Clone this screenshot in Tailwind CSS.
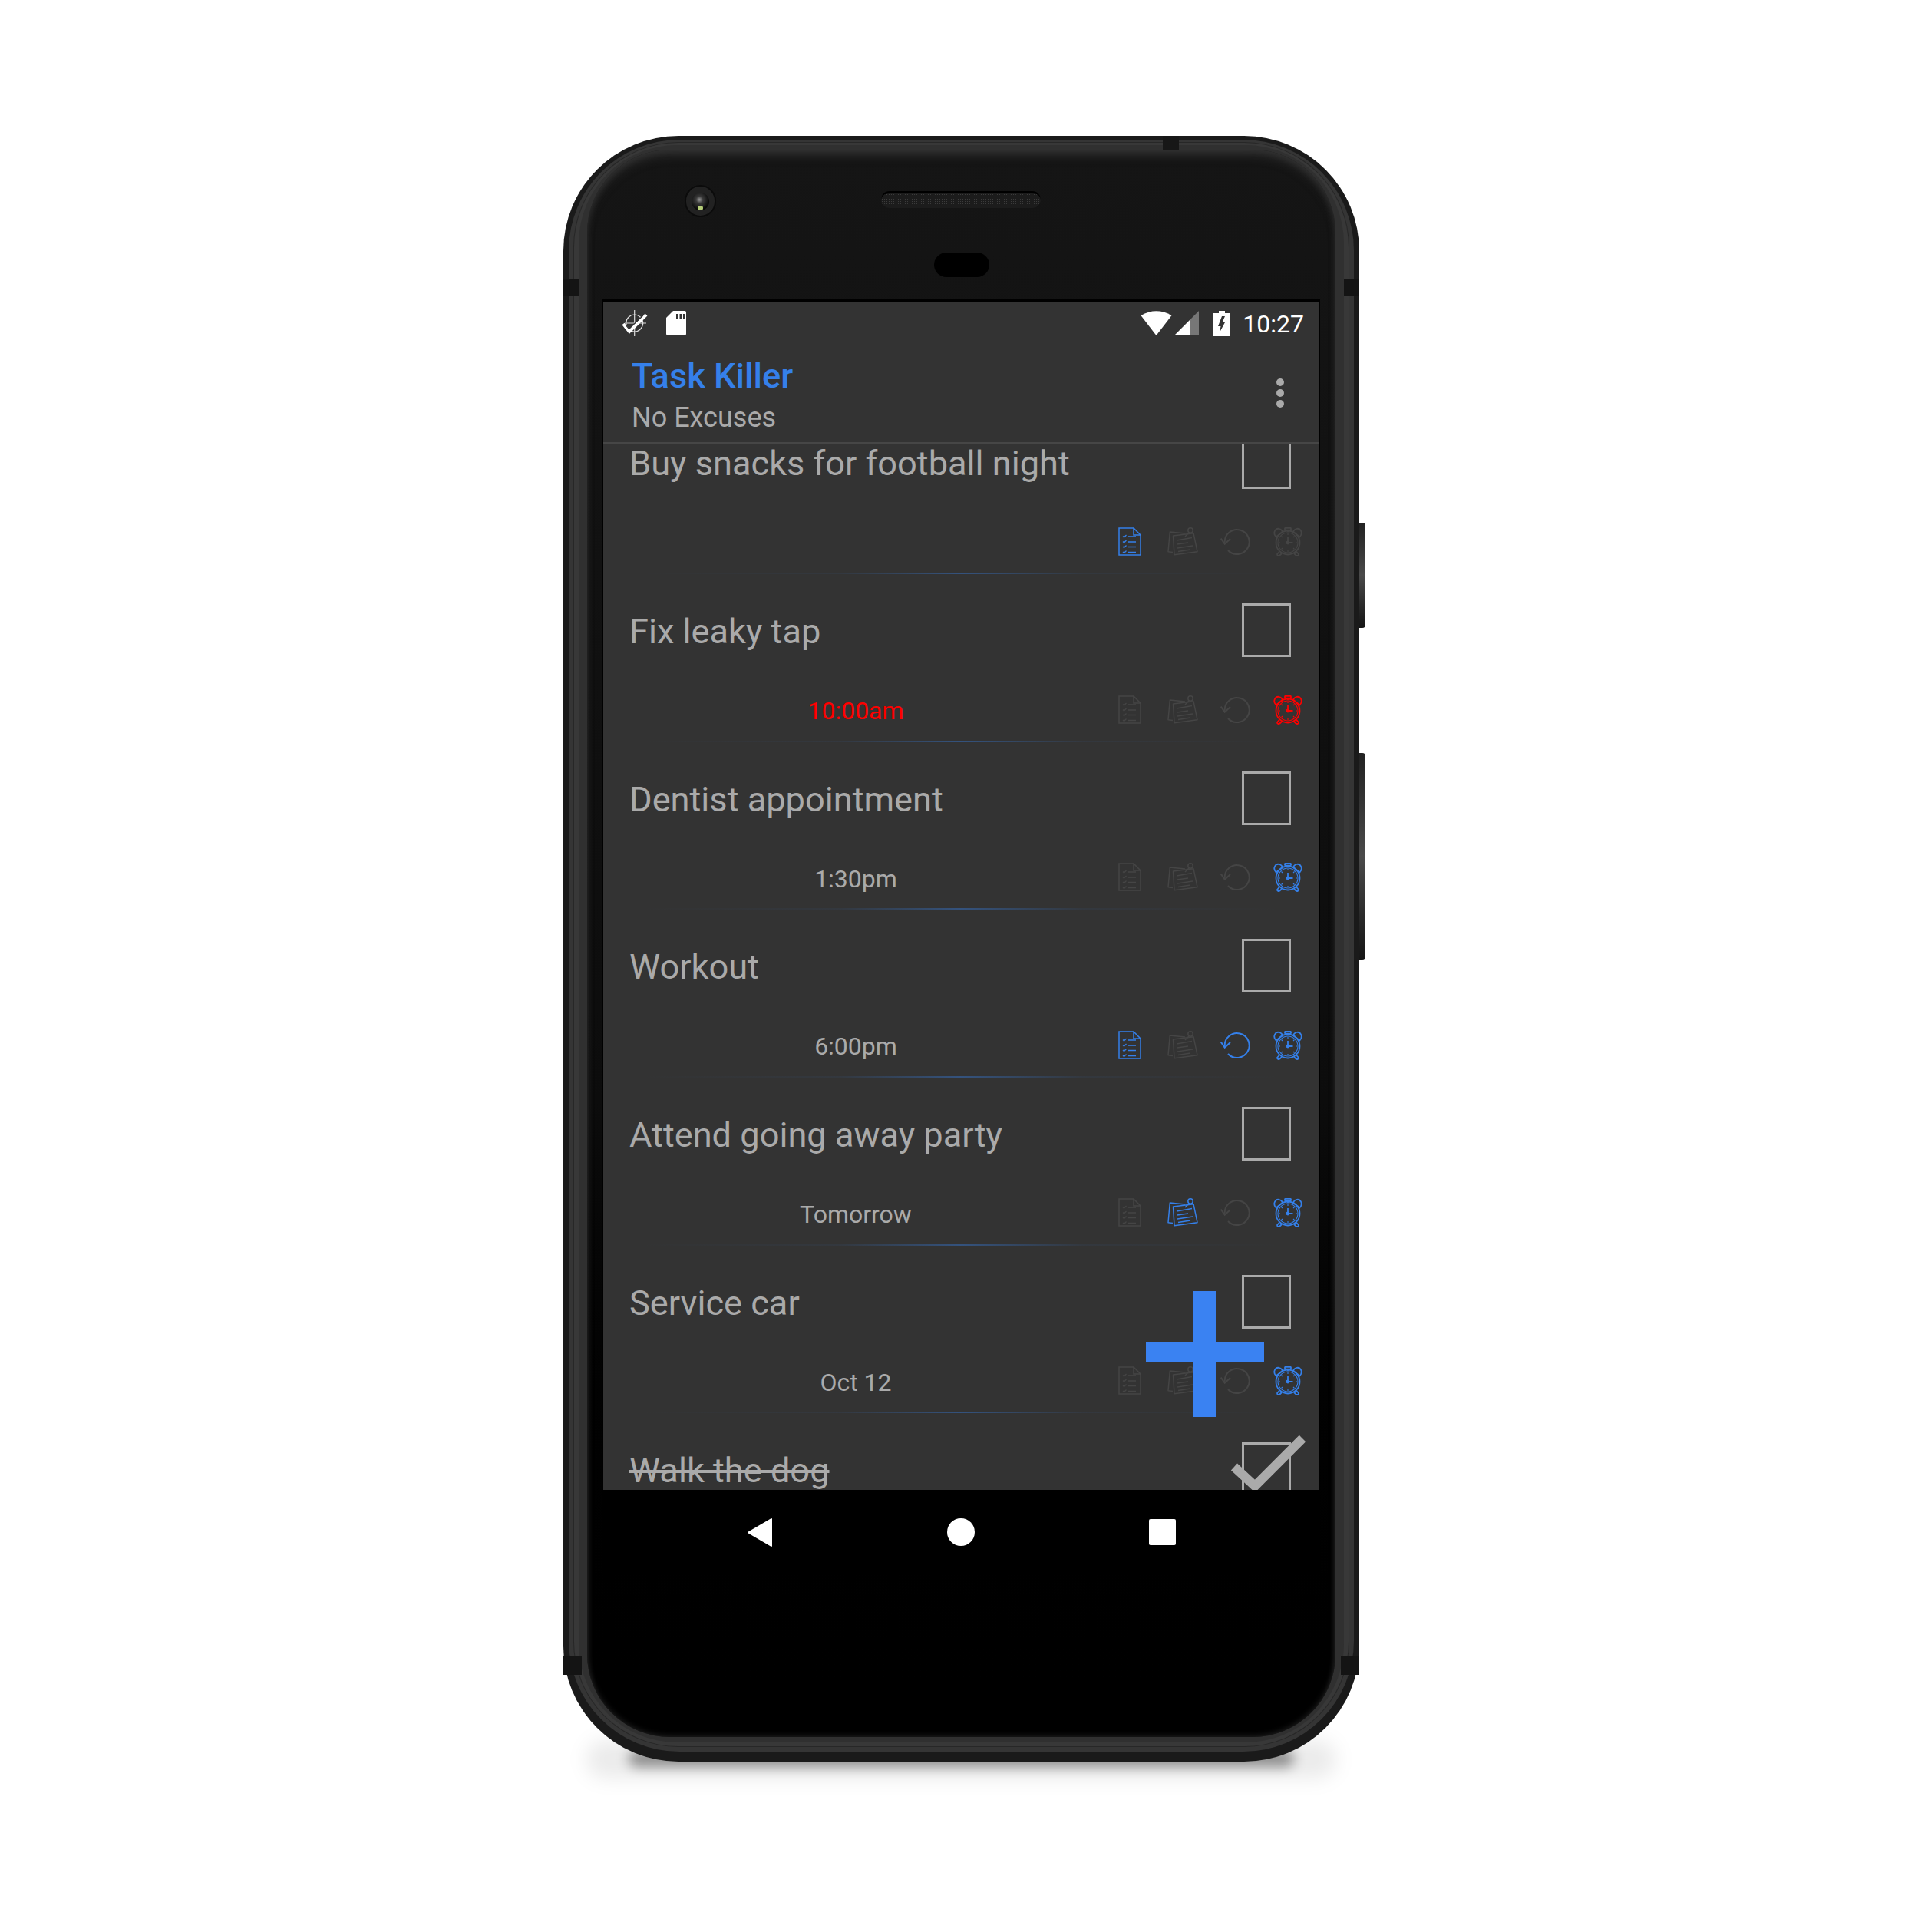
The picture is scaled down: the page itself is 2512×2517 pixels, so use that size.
<!DOCTYPE html>
<html lang="en">
<head>
  <meta charset="UTF-8" />
  <title>Task Killer</title>
  <script src="https://cdn.jsdelivr.net/npm/@tailwindcss/browser@4"></script>
</head>
<body class="bg-white font-[Roboto,sans-serif] w-[2512px] h-[2517px] overflow-hidden">
  <!-- shared task icons -->
  <svg class="hidden">
    <symbol id="doc" viewBox="0 0 30 37">
      <g fill="none" stroke="currentColor" stroke-width="1.5">
        <path d="M1 1H20L29 10V36H1Z" /><path d="M20 1V10H29" />
        <path stroke-width="1.300" d="M6 11.5l1.5 1.5 3-3M6 18.500l1.500 1.500 3-3M6 25l1.500 1.500 3-3M6 32l1.500 1.500 3-3" />
        <path stroke-width="1.600" d="M13 12H23M13 19H23M13 25.500H23M13 32.500H23" />
      </g>
    </symbol>
    <symbol id="note" viewBox="0 0 40 37">
      <g fill="none" stroke="currentColor" stroke-width="1.5" stroke-linejoin="round">
        <path d="M7 32.500L1 31.700L3.300 6L23 8" />
        <path d="M7.500 11L34 7.700L39 31.700L9 35.700Z" />
        <circle cx="30" cy="4" r="3.200" /><path d="M28 7L23 12" />
        <path stroke-width="1.600" d="M12 17L32 13.500M12.500 22L27 20M13 27L33 24M14 31.500L30 29" />
      </g>
    </symbol>
    <symbol id="undo" viewBox="0 0 38 36">
      <g fill="none" stroke="currentColor" stroke-width="2">
        <path d="M5.700 20A16 16 0 1 1 10 30" /><path d="M0.700 14.500L5.700 21.700L13 15" />
      </g>
    </symbol>
    <symbol id="alarm" viewBox="0 0 38 38">
      <g fill="none" stroke="currentColor" stroke-width="1.800">
        <circle cx="19" cy="20" r="15.500" /><circle cx="19" cy="20" r="13" stroke-width="1.100" />
        <path d="M3.500 12.500C-1.500 7 3 0.500 8 2C10 2.500 11.500 4 12 6Z" />
        <path d="M34.500 12.500C39.500 7 35 0.500 30 2C28 2.500 26.500 4 26 6Z" />
        <rect x="15" y="0.800" width="8" height="2.800" rx="1" /><path d="M19 3.600V6" />
        <path d="M8 31.500L5 35C5 37 7 37.500 8.500 36.500L11 34M30 31.500L33 35C33 37 31 37.500 29.500 36.500L27 34" />
        <path d="M19 13V20H25.500" /><circle cx="19" cy="20" r="1.500" fill="currentColor" />
        <path stroke-width="1.100" d="M19 8V10M19 30V32M7 20H9M29 20H31M10.500 11.500L12 13M27.500 11.500L26 13M10.500 28.500L12 27M27.500 28.500L26 27" />
      </g>
    </symbol>
  </svg>

  <div class="pl-[734px] pt-[177px]">
    <div class="relative isolate w-[1037px] h-[2118px]">
      <!-- shadow under the phone -->
      <div class="absolute -z-10 left-[85px] top-[2103px] w-[867px] h-[22px] rounded-full bg-black/40 blur-[8px]"></div>
      <div class="absolute -z-10 left-[30px] top-[2090px] w-[977px] h-[50px] rounded-full bg-black/8 blur-[12px]"></div>
      <!-- side buttons -->
      <div class="absolute -z-10 left-[1035px] top-[504px] w-[10px] h-[137px] rounded-r-[4px] bg-linear-to-b from-[#222] via-[#4a4a4a] to-[#151515]"></div>
      <div class="absolute -z-10 left-[1035px] top-[804px] w-[10px] h-[270px] rounded-r-[4px] bg-linear-to-b from-[#222] via-[#4a4a4a] to-[#151515]"></div>

      <!-- rim layers -->
      <div class="h-full bg-[#1a1a1a] rounded-[150px] pt-[5px] px-[7px] pb-[13px]">
        <div class="h-full bg-[#353535] rounded-[144px] pt-[3px] px-[6px] pb-[6px]">
          <div class="h-full bg-[#272727] rounded-[137px] p-[1px]">
            <div class="h-full bg-[#383838] rounded-[136px] pt-[3px] px-[6px] pb-[5px]">
              <div class="h-full bg-[#303030] rounded-[128px] pt-[6px] px-[11px] pb-[7px]">

                <!-- bezel -->
                <div class="h-full rounded-[108px] overflow-hidden bg-linear-to-b from-[#151515] via-[#0c0c0c] via-60% to-black shadow-[inset_0_12px_14px_-6px_#333,inset_0_0_8px_#2a2a2a] pt-[46px]">
                  <div class="flex items-start h-[42px]">
                    <div class="ml-[127px] w-[41px] h-[42px] rounded-full bg-[#222222] border-2 border-[#0b0b0b] flex items-center justify-center">
                      <div class="w-[23px] h-[23px] rounded-full bg-[radial-gradient(circle_at_45%_40%,#999_0,#3a3a3a_24%,#070707_70%)] flex items-end justify-center">
                        <div class="w-[7px] h-[6px] rounded-full bg-[#b4cc78]"></div>
                      </div>
                    </div>
                    <div class="ml-[215px] mt-[8px] w-[208px] h-[22px] rounded-full border-t-[3px] border-black bg-[#1c1c1c] bg-[radial-gradient(#3c3c3c_1px,transparent_1px)] bg-[length:3px_3px]"></div>
                  </div>
                  <div class="mt-[46px] mx-auto w-[72px] h-[32px] rounded-[16px] bg-black"></div>

                  <!-- screen -->
                  <div class="mt-[29px] ml-[19px] w-[936px] border-t-4 border-x-2 border-black">
                    <div class="bg-[#333333] h-[1547px] flex flex-col">

                      <!-- status bar -->
                      <div class="h-[54px] shrink-0 flex items-center pl-[23px] pr-[19px]">
                        <svg class="w-[36px] h-[36px]" viewBox="0 0 36 36" fill="none">
                          <circle cx="17.700" cy="18" r="11" stroke="#ddd" stroke-width="1.200" />
                          <path d="M17.700 1V35M5 18H33" stroke="#ddd" stroke-width="1.200" />
                          <path d="M3 19L11 29L33 7" stroke="#fff" stroke-width="4" />
                          <path d="M6 20L11 26M15 21L29 8" stroke="#333" stroke-width="1.200" />
                        </svg>
                        <svg class="ml-[23px] w-[26px] h-[32px]" viewBox="0 0 26 32">
                          <path fill="#fff" d="M9 0H24A2 2 0 0 1 26 2V30A2 2 0 0 1 24 32H2A2 2 0 0 1 0 30V9Z" />
                          <path fill="#333" d="M13 4h3v6h-3zM17.500 4h3v6h-3zM22 4h2.500v6H22z" />
                        </svg>
                        <svg class="ml-auto w-[41px] h-[32px]" viewBox="0 0 41 32">
                          <path fill="#fff" d="M0.500 6Q20.500 -5.500 40.500 6L20.500 32Z" />
                        </svg>
                        <svg class="ml-[3px] w-[32px] h-[32px]" viewBox="0 0 32 32">
                          <path fill="#777" d="M20 12L32 0V32H20Z" />
                          <path fill="#fff" d="M0 32L20 12V32Z" />
                        </svg>
                        <svg class="ml-[19px] w-[22px] h-[33px]" viewBox="0 0 22 33">
                          <path fill="#fff" d="M7 0H15V3H22V33H0V3H7Z" />
                          <path fill="#333" d="M11 7L6 20H9.500L8 28L15 15H11.500L15 7Z" />
                        </svg>
                        <span class="ml-[16px] pt-[2px] text-[32px] leading-[40px] text-white">10:27</span>
                      </div>

                      <!-- app bar -->
                      <div class="h-[128px] shrink-0 flex pl-[37px] pr-[45px] items-center justify-between">
                        <div class="pt-[5px]">
                          <div class="text-[#3580ea] text-[45.200px] leading-[54px] font-medium">Task Killer</div>
                          <div class="text-[#aaaaaa] text-[36px] leading-[44px] mt-[5px]">No Excuses</div>
                        </div>
                        <div class="flex flex-col gap-[4px]">
                          <div class="w-[10px] h-[10px] rounded-full bg-[#aaaaaa]"></div>
                          <div class="w-[10px] h-[10px] rounded-full bg-[#aaaaaa]"></div>
                          <div class="w-[10px] h-[10px] rounded-full bg-[#aaaaaa]"></div>
                        </div>
                      </div>
                      <div class="h-[2px] shrink-0 bg-[#464646] relative z-10"></div>

                      <!-- task list -->
                      <div class="relative flex-1 overflow-hidden">

                        <div class="h-[218.67px] -mt-[48.67px] flex flex-col">
                          <div class="h-[152px] flex justify-between items-start pl-[34px] pr-[36px]">
                            <div class="mt-[45px] text-[45.200px] leading-[60px] text-[#aaaaaa]">Buy snacks for football night</div>
                            <div class="mt-[38px] w-[64px] h-[70px] border-[3px] border-[#aaaaaa]"></div>
                          </div>
                          <div class="h-[49px] flex items-center">
                            <div class="w-[658px] pt-[3px] text-center text-[32px] leading-[40px] text-[#aaaaaa]"></div>
                            <div class="flex ml-[-6px]">
                              <div class="w-[68.5px] flex justify-center"><svg class="w-[30px] h-[37px] text-[#3580ea]"><use href="#doc" /></svg></div>
                              <div class="w-[68.5px] flex justify-center"><svg class="w-[40px] h-[37px] text-[#454545]"><use href="#note" /></svg></div>
                              <div class="w-[68.5px] flex justify-center"><svg class="w-[38px] h-[36px] text-[#454545]"><use href="#undo" /></svg></div>
                              <div class="w-[68.5px] flex justify-center"><svg class="w-[38px] h-[38px] text-[#454545]"><use href="#alarm" /></svg></div>
                            </div>
                          </div>
                          <div class="mt-auto h-[2px] bg-[linear-gradient(90deg,transparent_5%,#3580ea10_33%,#3580ea68_50%,#3580ea10_67%,transparent_95%)]"></div>
                        </div>

                        <div class="h-[218.67px] flex flex-col">
                          <div class="h-[152px] flex justify-between items-start pl-[34px] pr-[36px]">
                            <div class="mt-[45px] text-[45.200px] leading-[60px] text-[#aaaaaa]">Fix leaky tap</div>
                            <div class="mt-[38px] w-[64px] h-[70px] border-[3px] border-[#aaaaaa]"></div>
                          </div>
                          <div class="h-[49px] flex items-center">
                            <div class="w-[658px] pt-[3px] text-center text-[32px] leading-[40px] text-[#ff0000]">10:00am</div>
                            <div class="flex ml-[-6px]">
                              <div class="w-[68.5px] flex justify-center"><svg class="w-[30px] h-[37px] text-[#454545]"><use href="#doc" /></svg></div>
                              <div class="w-[68.5px] flex justify-center"><svg class="w-[40px] h-[37px] text-[#454545]"><use href="#note" /></svg></div>
                              <div class="w-[68.5px] flex justify-center"><svg class="w-[38px] h-[36px] text-[#454545]"><use href="#undo" /></svg></div>
                              <div class="w-[68.5px] flex justify-center"><svg class="w-[38px] h-[38px] text-[#ff0000]"><use href="#alarm" /></svg></div>
                            </div>
                          </div>
                          <div class="mt-auto h-[2px] bg-[linear-gradient(90deg,transparent_5%,#3580ea10_33%,#3580ea68_50%,#3580ea10_67%,transparent_95%)]"></div>
                        </div>

                        <div class="h-[218.67px] flex flex-col">
                          <div class="h-[152px] flex justify-between items-start pl-[34px] pr-[36px]">
                            <div class="mt-[45px] text-[45.200px] leading-[60px] text-[#aaaaaa]">Dentist appointment</div>
                            <div class="mt-[38px] w-[64px] h-[70px] border-[3px] border-[#aaaaaa]"></div>
                          </div>
                          <div class="h-[49px] flex items-center">
                            <div class="w-[658px] pt-[3px] text-center text-[32px] leading-[40px] text-[#aaaaaa]">1:30pm</div>
                            <div class="flex ml-[-6px]">
                              <div class="w-[68.5px] flex justify-center"><svg class="w-[30px] h-[37px] text-[#454545]"><use href="#doc" /></svg></div>
                              <div class="w-[68.5px] flex justify-center"><svg class="w-[40px] h-[37px] text-[#454545]"><use href="#note" /></svg></div>
                              <div class="w-[68.5px] flex justify-center"><svg class="w-[38px] h-[36px] text-[#454545]"><use href="#undo" /></svg></div>
                              <div class="w-[68.5px] flex justify-center"><svg class="w-[38px] h-[38px] text-[#3580ea]"><use href="#alarm" /></svg></div>
                            </div>
                          </div>
                          <div class="mt-auto h-[2px] bg-[linear-gradient(90deg,transparent_5%,#3580ea10_33%,#3580ea68_50%,#3580ea10_67%,transparent_95%)]"></div>
                        </div>

                        <div class="h-[218.67px] flex flex-col">
                          <div class="h-[152px] flex justify-between items-start pl-[34px] pr-[36px]">
                            <div class="mt-[45px] text-[45.200px] leading-[60px] text-[#aaaaaa]">Workout</div>
                            <div class="mt-[38px] w-[64px] h-[70px] border-[3px] border-[#aaaaaa]"></div>
                          </div>
                          <div class="h-[49px] flex items-center">
                            <div class="w-[658px] pt-[3px] text-center text-[32px] leading-[40px] text-[#aaaaaa]">6:00pm</div>
                            <div class="flex ml-[-6px]">
                              <div class="w-[68.5px] flex justify-center"><svg class="w-[30px] h-[37px] text-[#3580ea]"><use href="#doc" /></svg></div>
                              <div class="w-[68.5px] flex justify-center"><svg class="w-[40px] h-[37px] text-[#454545]"><use href="#note" /></svg></div>
                              <div class="w-[68.5px] flex justify-center"><svg class="w-[38px] h-[36px] text-[#3580ea]"><use href="#undo" /></svg></div>
                              <div class="w-[68.5px] flex justify-center"><svg class="w-[38px] h-[38px] text-[#3580ea]"><use href="#alarm" /></svg></div>
                            </div>
                          </div>
                          <div class="mt-auto h-[2px] bg-[linear-gradient(90deg,transparent_5%,#3580ea10_33%,#3580ea68_50%,#3580ea10_67%,transparent_95%)]"></div>
                        </div>

                        <div class="h-[218.67px] flex flex-col">
                          <div class="h-[152px] flex justify-between items-start pl-[34px] pr-[36px]">
                            <div class="mt-[45px] text-[45.200px] leading-[60px] text-[#aaaaaa]">Attend going away party</div>
                            <div class="mt-[38px] w-[64px] h-[70px] border-[3px] border-[#aaaaaa]"></div>
                          </div>
                          <div class="h-[49px] flex items-center">
                            <div class="w-[658px] pt-[3px] text-center text-[32px] leading-[40px] text-[#aaaaaa]">Tomorrow</div>
                            <div class="flex ml-[-6px]">
                              <div class="w-[68.5px] flex justify-center"><svg class="w-[30px] h-[37px] text-[#454545]"><use href="#doc" /></svg></div>
                              <div class="w-[68.5px] flex justify-center"><svg class="w-[40px] h-[37px] text-[#3580ea]"><use href="#note" /></svg></div>
                              <div class="w-[68.5px] flex justify-center"><svg class="w-[38px] h-[36px] text-[#454545]"><use href="#undo" /></svg></div>
                              <div class="w-[68.5px] flex justify-center"><svg class="w-[38px] h-[38px] text-[#3580ea]"><use href="#alarm" /></svg></div>
                            </div>
                          </div>
                          <div class="mt-auto h-[2px] bg-[linear-gradient(90deg,transparent_5%,#3580ea10_33%,#3580ea68_50%,#3580ea10_67%,transparent_95%)]"></div>
                        </div>

                        <div class="h-[218.67px] flex flex-col">
                          <div class="h-[152px] flex justify-between items-start pl-[34px] pr-[36px]">
                            <div class="mt-[45px] text-[45.200px] leading-[60px] text-[#aaaaaa]">Service car</div>
                            <div class="mt-[38px] w-[64px] h-[70px] border-[3px] border-[#aaaaaa]"></div>
                          </div>
                          <div class="h-[49px] flex items-center">
                            <div class="w-[658px] pt-[3px] text-center text-[32px] leading-[40px] text-[#aaaaaa]">Oct 12</div>
                            <div class="flex ml-[-6px]">
                              <div class="w-[68.5px] flex justify-center"><svg class="w-[30px] h-[37px] text-[#454545]"><use href="#doc" /></svg></div>
                              <div class="w-[68.5px] flex justify-center"><svg class="w-[40px] h-[37px] text-[#454545]"><use href="#note" /></svg></div>
                              <div class="w-[68.5px] flex justify-center"><svg class="w-[38px] h-[36px] text-[#454545]"><use href="#undo" /></svg></div>
                              <div class="w-[68.5px] flex justify-center"><svg class="w-[38px] h-[38px] text-[#3580ea]"><use href="#alarm" /></svg></div>
                            </div>
                          </div>
                          <div class="mt-auto h-[2px] bg-[linear-gradient(90deg,transparent_5%,#3580ea10_33%,#3580ea68_50%,#3580ea10_67%,transparent_95%)]"></div>
                        </div>

                        <div class="h-[218.67px] flex flex-col">
                          <div class="h-[152px] flex justify-between items-start pl-[34px] pr-[36px]">
                            <div class="mt-[45px] text-[45.200px] leading-[60px] text-[#aaaaaa] line-through">Walk the dog</div>
                            <div class="relative mt-[38px] w-[64px] h-[70px] border-[3px] border-[#aaaaaa]">
                              <svg class="absolute -left-[17px] -top-[12px] w-[96px] h-[76px] overflow-visible" viewBox="0 0 96 76" fill="none">
                                <path d="M4 41L31 66L93 4" stroke="#aaaaaa" stroke-width="12" />
                              </svg>
                            </div>
                          </div>
                        </div>

                        <!-- add button -->
                        <svg class="absolute left-[707px] top-[1104px] w-[154px] h-[164px]" viewBox="0 0 154 164">
                          <path fill="#3a82f2" d="M62 0H91V66H154V93H91V164H62V93H0V66H62Z" />
                        </svg>
                      </div>
                    </div>

                    <!-- navigation bar -->
                    <div class="h-[108px] pt-[2px] bg-black flex items-center pl-[188px]">
                      <svg class="w-[32px] h-[37px]" viewBox="0 0 32 37">
                        <path fill="#fff" stroke="#fff" stroke-width="2" stroke-linejoin="round" d="M31 1V36L1 18.500Z" />
                      </svg>
                      <div class="ml-[228px] w-[36px] h-[36px] rounded-full bg-white"></div>
                      <div class="ml-[227px] w-[35px] h-[34px] rounded-[2px] bg-white"></div>
                    </div>
                  </div>
                </div>

              </div>
            </div>
          </div>
        </div>
      </div>

      <!-- antenna bands -->
      <div class="absolute left-[781px] top-0 w-[21px] h-[18px] bg-[#171717]"></div>
      <div class="absolute left-0 top-[186px] w-[20px] h-[22px] bg-[#141414]"></div>
      <div class="absolute right-0 top-[186px] w-[20px] h-[22px] bg-[#141414]"></div>
      <div class="absolute left-0 top-[1980px] w-[24px] h-[25px] bg-[#141414]"></div>
      <div class="absolute right-0 top-[1980px] w-[24px] h-[25px] bg-[#141414]"></div>
    </div>
  </div>
</body>
</html>
